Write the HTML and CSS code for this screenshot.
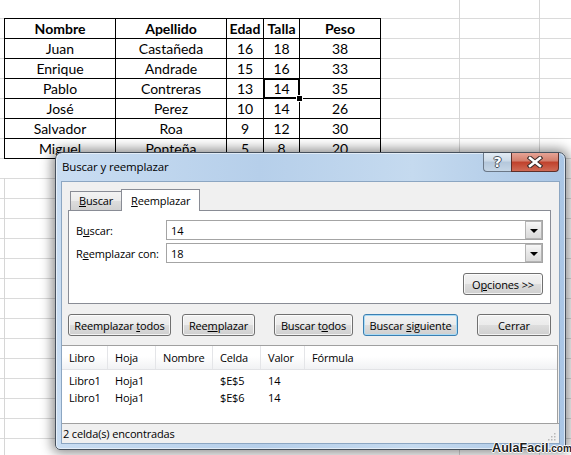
FILE: index.html
```html
<!DOCTYPE html>
<html lang="es">
<head>
<meta charset="utf-8">
<title>Buscar y reemplazar</title>
<link rel="stylesheet" href="styles.css">
</head>
<body>
<div class="sheet">
  <table class="data">
    <colgroup><col class="c1"><col class="c2"><col class="c3"><col class="c4"><col class="c5"></colgroup>
    <tr><th>Nombre</th><th>Apellido</th><th>Edad</th><th>Talla</th><th>Peso</th></tr>
    <tr><td>Juan</td><td>Castañeda</td><td>16</td><td>18</td><td>38</td></tr>
    <tr><td>Enrique</td><td>Andrade</td><td>15</td><td>16</td><td>33</td></tr>
    <tr><td>Pablo</td><td>Contreras</td><td>13</td><td class="sel">14</td><td>35</td></tr>
    <tr><td>José</td><td>Perez</td><td>10</td><td>14</td><td>26</td></tr>
    <tr><td>Salvador</td><td>Roa</td><td>9</td><td>12</td><td>30</td></tr>
    <tr><td>Miguel</td><td>Ponteña</td><td>5</td><td>8</td><td>20</td></tr>
  </table>

  <div class="dialog">
    <div class="titlebar">
      <span class="title">Buscar y reemplazar</span>
      <div class="caps">
        <div class="cap help">?</div>
        <div class="cap close">
          <svg width="16" height="12" viewBox="0 0 16 12"><path d="M3 2 L13 10 M13 2 L3 10" stroke="#3a2a28" stroke-width="4.6" stroke-linecap="square"/><path d="M3 2 L13 10 M13 2 L3 10" stroke="#fff" stroke-width="2.6" stroke-linecap="square"/></svg>
        </div>
      </div>
    </div>
    <div class="client">
      <div class="tabbar">
        <div class="tab"><u>B</u>uscar</div>
        <div class="tab active"><u>R</u>eemplazar</div>
      </div>
      <div class="panel">
        <div class="field">
          <span class="label">B<u>u</u>scar:</span>
          <div class="combo"><span>14</span><span class="drop"></span></div>
        </div>
        <div class="field">
          <span class="label">R<u>e</u>emplazar con:</span>
          <div class="combo"><span>18</span><span class="drop"></span></div>
        </div>
        <div class="opts"><button class="btn b-opc">O<u>p</u>ciones &gt;&gt;</button></div>
      </div>
      <div class="actions">
        <button class="btn b1">Reemplazar <u>t</u>odos</button>
        <button class="btn b2">Ree<u>m</u>plazar</button>
        <button class="btn b3">Buscar t<u>o</u>dos</button>
        <button class="btn b4 focus">Buscar <u>s</u>iguiente</button>
        <button class="btn b5">Cerrar</button>
      </div>
      <div class="results">
        <div class="lrow lhead">
          <span>Libro</span><span>Hoja</span><span>Nombre</span><span>Celda</span><span>Valor</span><span>Fórmula</span>
        </div>
        <div class="lbody">
          <div class="lrow"><span>Libro1</span><span>Hoja1</span><span></span><span>$E$5</span><span>14</span><span></span></div>
          <div class="lrow"><span>Libro1</span><span>Hoja1</span><span></span><span>$E$6</span><span>14</span><span></span></div>
        </div>
      </div>
      <div class="status">
        <span>2 celda(s) encontradas</span>
        <svg class="grip" width="9" height="9" viewBox="0 0 9 9"><g fill="#b8b8b8"><rect x="7" y="1" width="1.5" height="1.5"/><rect x="4" y="4" width="1.5" height="1.5"/><rect x="7" y="4" width="1.5" height="1.5"/><rect x="1" y="7" width="1.5" height="1.5"/><rect x="4" y="7" width="1.5" height="1.5"/><rect x="7" y="7" width="1.5" height="1.5"/></g></svg>
      </div>
    </div>
  </div>

  <div class="watermark"><span class="brand">AulaFacil</span><span class="com">.com</span></div>
</div>
</body>
</html>
```
FILE: styles.css
```css
html, body {
  margin: 0;
  padding: 0;
  background: #fff;
}

.sheet {
  position: relative;
  width: 571px;
  height: 455px;
  overflow: hidden;
  box-sizing: border-box;
  padding: 18px 0 0 4px;
  background-color: #fff;
  background-image:
    linear-gradient(#d6d6d6, #d6d6d6),
    linear-gradient(#d6d6d6, #d6d6d6),
    linear-gradient(#d6d6d6, #d6d6d6),
    linear-gradient(to bottom, #dadada 1px, transparent 1px);
  background-size: 1px 100%, 1px 100%, 1px 300px, 100% 20px;
  background-position: 459px 0, 539px 0, 4px 178px, 0 18px;
  background-repeat: no-repeat, no-repeat, no-repeat, repeat-y;
}

/* ---------- spreadsheet table ---------- */
.data {
  border-collapse: collapse;
  table-layout: fixed;
  width: 376px;
  background: #fff;
  font-family: Lato, "Liberation Sans", sans-serif;
  font-size: 14px;
  color: #000;
}
.data .c1 { width: 111px; }
.data .c2 { width: 111px; }
.data .c3 { width: 37px; }
.data .c4 { width: 36px; }
.data .c5 { width: 81px; }
.data tr { height: 20px; }
.data th, .data td {
  border: 1px solid #000;
  padding: 0;
  text-align: center;
  line-height: 18px;
  white-space: nowrap;
  overflow: hidden;
}
.data th { font-weight: 700; }
.data td.sel {
  position: relative;
  overflow: visible;
}
.data td.sel::after {
  content: "";
  position: absolute;
  left: -1px;
  top: -1px;
  right: -1px;
  bottom: -1px;
  border: 2px solid #000;
}
.data td.sel::before {
  content: "";
  position: absolute;
  right: -4px;
  bottom: -4px;
  width: 5px;
  height: 5px;
  background: #000;
  border: 1px solid #fff;
  z-index: 1;
}

/* ---------- dialog ---------- */
.dialog {
  position: absolute;
  left: 55px;
  top: 152px;
  width: 511px;
  height: 298px;
  box-sizing: border-box;
  border: 1px solid #46505c;
  border-radius: 7px 7px 5px 5px;
  background: linear-gradient(to right, #c9ddf2 0%, #b6cfea 40%, #c5daef 70%, #aac6e5 100%);
  box-shadow: 0 0 12px 3px rgba(0, 0, 0, 0.45), inset 0 0 0 1px rgba(255, 255, 255, 0.55);
  display: flex;
  flex-direction: column;
  font-family: "Open Sans", "DejaVu Sans", sans-serif;
  font-size: 11px;
  letter-spacing: -0.15px;
  color: #000;
}

.titlebar {
  height: 28px;
  flex: none;
  display: flex;
  justify-content: space-between;
  align-items: flex-start;
  padding: 0 6px;
}
.title {
  line-height: 28px;
  font-size: 11.5px;
  color: #000;
}
.caps { display: flex; }
.cap {
  height: 19px;
  box-sizing: border-box;
  display: flex;
  align-items: center;
  justify-content: center;
}
.cap.help {
  width: 28px;
  border: 1px solid #6a7787;
  border-top: 0;
  border-right: 0;
  border-radius: 0 0 0 4px;
  background: linear-gradient(#e3ecf5, #cbd9e7 45%, #b4c7db 50%, #c6d6e6);
  font-family: "DejaVu Sans", sans-serif;
  font-weight: 700;
  font-size: 14px;
  color: #fff;
  text-shadow: 1px 0 0 #46505c, -1px 0 0 #46505c, 0 1px 0 #46505c, 0 -1px 0 #46505c;
}
.cap.close {
  width: 48px;
  border: 1px solid #5d2f2a;
  border-top: 0;
  border-radius: 0 0 4px 0;
  background: linear-gradient(#e6a496, #d27d6b 45%, #c0402b 50%, #cf6a55);
}

.client {
  flex: 1;
  margin: 0 5px 5px;
  border: 1px solid #8ca6c2;
  background: #f0f0f0;
  display: flex;
  flex-direction: column;
  min-height: 0;
}

/* tabs */
.tabbar {
  display: flex;
  align-items: flex-end;
  height: 21px;
  margin: 7px 0 0 6px;
  padding-left: 2px;
}
.tab {
  height: 18px;
  line-height: 18px;
  border: 1px solid #898c95;
  border-bottom: 0;
  padding: 0 8px;
  background: linear-gradient(#f3f3f3, #ebebeb 50%, #dddddd 51%, #d1d1d1);
}
.tab.active {
  height: 21px;
  line-height: 22px;
  margin-bottom: -1px;
  margin-left: -1px;
  padding: 0 9px;
  background: #fff;
  position: relative;
  z-index: 1;
}

.panel {
  height: 94px;
  box-sizing: border-box;
  margin: 0 8px 0 6px;
  border: 1px solid #898c95;
  background: #fff;
  padding: 9px 5px 0 7px;
}
.field {
  display: flex;
  align-items: center;
  height: 20px;
}
.field + .field { margin-top: 3px; }
.label { width: 90px; flex: none; }
.combo {
  width: 377px;
  height: 20px;
  box-sizing: border-box;
  border: 1px solid #a4a4a4;
  display: flex;
  align-items: center;
  justify-content: space-between;
  padding-left: 4px;
}
.drop {
  width: 17px;
  height: 18px;
  box-sizing: border-box;
  border: 1px solid #b4b4b4;
  background: linear-gradient(#f7f7f7, #e7e7e7 50%, #dadada);
  display: flex;
  align-items: center;
  justify-content: center;
}
.drop::after {
  content: "";
  width: 0;
  height: 0;
  border-left: 4px solid transparent;
  border-right: 4px solid transparent;
  border-top: 4px solid #000;
  margin-top: 1px;
}
.opts {
  display: flex;
  justify-content: flex-end;
  margin-top: 10px;
  padding-right: 2px;
}

/* buttons */
.btn {
  font: inherit;
  letter-spacing: inherit;
  color: #000;
  height: 22px;
  box-sizing: border-box;
  padding: 0;
  border: 1px solid #707070;
  border-radius: 3px;
  background: linear-gradient(#f2f2f2, #ebebeb 50%, #dddddd 51%, #cfcfcf);
  box-shadow: inset 0 0 0 1px rgba(255, 255, 255, 0.75);
  flex: none;
}
.btn.focus {
  border-color: #3c7fb1;
  box-shadow: inset 0 0 0 1px #a9dbf6;
}
.b-opc { width: 80px; }
.actions {
  display: flex;
  height: 22px;
  margin: 10px 0 0 6px;
}
.b1 { width: 103px; }
.b2 { width: 73px; margin-left: 11px; }
.b3 { width: 79px; margin-left: 19px; }
.b4 { width: 95px; margin-left: 10px; }
.b5 { width: 74px; margin-left: 19px; }

/* results list */
.results {
  margin-top: 9px;
  margin-right: 1px;
  height: 78px;
  box-sizing: border-box;
  border-top: 1px solid #a0a0a0;
  border-right: 1px solid #a0a0a0;
  background: #fff;
  flex: none;
}
.lrow {
  display: grid;
  grid-template-columns: 46px 48px 57px 48px 44px 1fr;
  height: 17px;
  line-height: 17px;
}
.lrow span { padding-left: 7px; white-space: nowrap; }
.lhead {
  height: 23px;
  line-height: 23px;
  border-bottom: 1px solid #e2e3e6;
  background: linear-gradient(#ffffff, #ffffff 45%, #f1f2f4);
}
.lhead span { border-right: 1px solid #e4e5e8; }
.lhead span:last-child { border-right: 0; }
.lbody { padding-top: 2px; }

.status {
  flex: 1;
  border-top: 1px solid #a0a0a0;
  display: flex;
  justify-content: space-between;
  align-items: center;
  padding: 0 3px 0 1px;
}
.grip { align-self: flex-end; margin-bottom: 2px; }

/* watermark */
.watermark {
  position: absolute;
  left: 492px;
  bottom: 0;
  display: flex;
  align-items: baseline;
  white-space: nowrap;
  font-family: "Liberation Sans", Arial, sans-serif;
  font-weight: 700;
  line-height: 12px;
  color: #1e1e1e;
  text-shadow: 1px 0 0 #fff, -1px 0 0 #fff, 0 1px 0 #fff, 0 -1px 0 #fff;
}
.watermark .brand { font-size: 12.5px; letter-spacing: 0.1px; }
.watermark .com { font-size: 10px; }
```
